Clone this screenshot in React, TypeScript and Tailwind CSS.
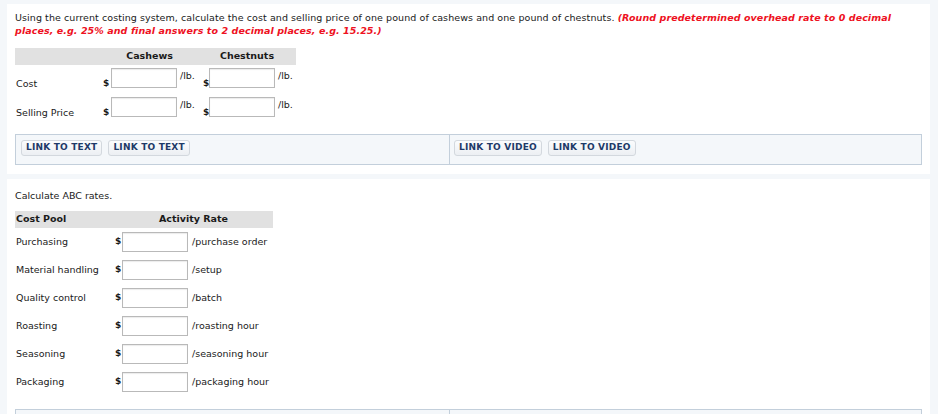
const font = { fontFamily: '"DejaVu Sans", Verdana, sans-serif' };

function Box() {
  return <div className="h-[20px] w-[66px] border border-[#b9b9b9] bg-white shadow-[inset_0_1px_1px_rgba(0,0,0,0.08)]" />;
}

function LinkBtn({ label }: { label: string }) {
  return (
    <div className="flex h-[16px] items-center rounded-[3px] border border-[#d3d8de] bg-gradient-to-b from-[#fbfcfd] to-[#eceff3] px-[4px] text-[9px] font-bold tracking-[0.2px] text-[#1e3a68]">
      {label}
    </div>
  );
}

function LinkBar() {
  return (
    <div className="flex h-[31px] border border-[#c3cfdb] bg-[#f4f7fa]">
      <div className="flex w-[434px] gap-[6px] border-r border-[#c3cfdb] pl-[5px] pt-[5px]">
        <LinkBtn label="LINK TO TEXT" />
        <LinkBtn label="LINK TO TEXT" />
      </div>
      <div className="flex flex-1 gap-[6px] pl-[4px] pt-[5px]">
        <LinkBtn label="LINK TO VIDEO" />
        <LinkBtn label="LINK TO VIDEO" />
      </div>
    </div>
  );
}

const pools = [
  ["Purchasing", "/purchase order"],
  ["Material handling", "/setup"],
  ["Quality control", "/batch"],
  ["Roasting", "/roasting hour"],
  ["Seasoning", "/seasoning hour"],
  ["Packaging", "/packaging hour"],
];

export default function App() {
  return (
    <div className="h-[414px] overflow-hidden bg-[#f4f7fa] pl-[7px] pr-[8px] pt-[4px] text-[#1a1a1a]" style={font}>
      <div className="bg-white px-[8px] pb-[9px] pt-[8px]">
        <p className="w-[890px] text-[9.5px] leading-[12.5px] tracking-[0.08px]">
          Using the current costing system, calculate the cost and selling price of one pound of cashews and one pound of chestnuts.{" "}
          <span className="font-bold italic text-[#ee1122]">
            (Round predetermined overhead rate to 0 decimal places, e.g. 25% and final answers to 2 decimal places, e.g. 15.25.)
          </span>
        </p>

        <div className="mt-[11px] w-[281px]">
          <div className="flex h-[17px] items-center bg-[#e1e1e1] text-[9.5px] font-bold">
            <span className="w-[86px]" />
            <span className="w-[97px] text-center">Cashews</span>
            <span className="w-[98px] text-center">Chestnuts</span>
          </div>
          {["Cost", "Selling Price"].map((r, i) => (
            <div key={r} className={`flex items-start text-[9.5px] leading-none ${i === 0 ? "mt-[3px]" : "mt-[8px]"}`}>
              <span className="w-[88px] pl-[1px] pt-[11px]">{r}</span>
              <span className="w-[8px] pt-[11px] text-[9px] font-bold">$</span>
              <Box />
              <span className="w-[26px] pl-[3px] pt-[3px]">/lb.</span>
              <span className="w-[6px] pt-[11px] text-[9px] font-bold">$</span>
              <Box />
              <span className="pl-[3px] pt-[3px]">/lb.</span>
            </div>
          ))}
        </div>

        <div className="mt-[17px]">
          <LinkBar />
        </div>
      </div>

      <div className="mt-[5px] bg-white px-[8px] pt-[11px]">
        <p className="text-[9.5px] leading-[12px]">Calculate ABC rates.</p>
        <div className="mt-[9px] w-[258px]">
          <div className="flex h-[17px] items-center bg-[#e1e1e1] text-[9.5px] font-bold">
            <span className="w-[144px] pl-[1px]">Cost Pool</span>
            <span>Activity Rate</span>
          </div>
          {pools.map(([name, unit], i) => (
            <div key={name} className={`flex items-center ${i === 0 ? "mt-[4px]" : "mt-[8px]"}`}>
              <span className="w-[100px] pl-[1px] text-[9.5px]">{name}</span>
              <span className="w-[7px] text-[9px] font-bold">$</span>
              <Box />
              <span className="whitespace-nowrap pl-[4px] text-[9.5px]">{unit}</span>
            </div>
          ))}
        </div>
        <div className="mt-[17px]">
          <LinkBar />
        </div>
      </div>
    </div>
  );
}
